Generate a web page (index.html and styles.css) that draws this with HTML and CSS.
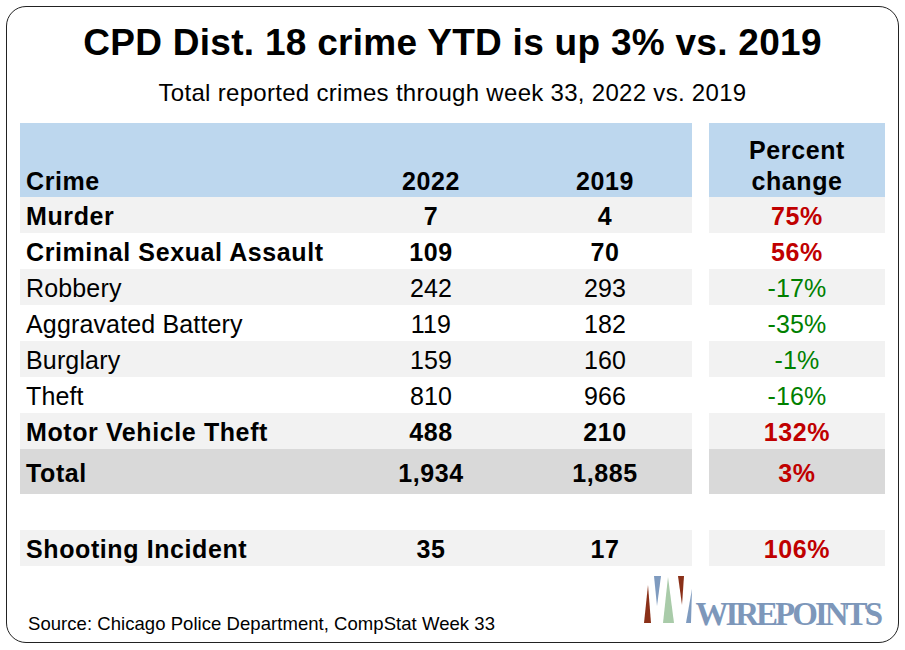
FILE: index.html
```html
<!DOCTYPE html>
<html>
<head>
<meta charset="utf-8">
<link rel="stylesheet" href="styles.css">
</head>
<body>
<div class="card">
  <h1 class="title">CPD Dist. 18 crime YTD is up 3% vs. 2019</h1>
  <p class="subtitle">Total reported crimes through week 33, 2022 vs. 2019</p>
  <div class="table">
    <div class="row head">
      <div class="cell name">Crime</div>
      <div class="cell num">2022</div>
      <div class="cell num">2019</div>
      <div class="cell pct">Percent<br>change</div>
    </div>
    <div class="row shade bold">
      <div class="cell name">Murder</div>
      <div class="cell num">7</div>
      <div class="cell num">4</div>
      <div class="cell pct up">75%</div>
    </div>
    <div class="row bold">
      <div class="cell name">Criminal Sexual Assault</div>
      <div class="cell num">109</div>
      <div class="cell num">70</div>
      <div class="cell pct up">56%</div>
    </div>
    <div class="row shade">
      <div class="cell name">Robbery</div>
      <div class="cell num">242</div>
      <div class="cell num">293</div>
      <div class="cell pct down">-17%</div>
    </div>
    <div class="row">
      <div class="cell name">Aggravated Battery</div>
      <div class="cell num">119</div>
      <div class="cell num">182</div>
      <div class="cell pct down">-35%</div>
    </div>
    <div class="row shade">
      <div class="cell name">Burglary</div>
      <div class="cell num">159</div>
      <div class="cell num">160</div>
      <div class="cell pct down">-1%</div>
    </div>
    <div class="row">
      <div class="cell name">Theft</div>
      <div class="cell num">810</div>
      <div class="cell num">966</div>
      <div class="cell pct down">-16%</div>
    </div>
    <div class="row shade bold">
      <div class="cell name">Motor Vehicle Theft</div>
      <div class="cell num">488</div>
      <div class="cell num">210</div>
      <div class="cell pct up">132%</div>
    </div>
    <div class="row total bold">
      <div class="cell name">Total</div>
      <div class="cell num">1,934</div>
      <div class="cell num">1,885</div>
      <div class="cell pct up">3%</div>
    </div>
    <div class="spacer"></div>
    <div class="row shade bold">
      <div class="cell name">Shooting Incident</div>
      <div class="cell num">35</div>
      <div class="cell num">17</div>
      <div class="cell pct up">106%</div>
    </div>
  </div>
  <div class="footer">
    <p class="source">Source: Chicago Police Department, CompStat Week 33</p>
    <div class="logo">
      <svg class="spikes" width="54" height="50" viewBox="0 0 54 50">
        <polygon points="4,48 11,48 8,10" fill="#8a3018"/>
        <polygon points="14,1 21,1 17,31" fill="#7f9bbf"/>
        <polygon points="23,48 34,48 28,2" fill="#a9cba9"/>
        <polygon points="38,1 44,1 42,30" fill="#8a3018"/>
        <polygon points="46,48 51,48 52,14" fill="#7f9bbf"/>
      </svg>
      <span class="brand">WIREPOINTS</span>
    </div>
  </div>
</div>
</body>
</html>
```

FILE: styles.css
```css
html, body {
  margin: 0;
  padding: 0;
  background: #ffffff;
}

body {
  font-family: "Liberation Sans", Arial, sans-serif;
  color: #000000;
}

.card {
  box-sizing: border-box;
  width: 893px;
  height: 637px;
  margin: 6px;
  border: 1px solid #222222;
  border-radius: 20px;
  padding: 14px 13px 0 13px;
  display: flex;
  flex-direction: column;
}

.title {
  margin: 0;
  font-size: 37px;
  line-height: 44px;
  font-weight: bold;
  letter-spacing: 0.28px;
  text-align: center;
}

.subtitle {
  margin: 13px 0 0 0;
  font-size: 24px;
  line-height: 30px;
  letter-spacing: 0.3px;
  text-align: center;
}

.table {
  margin-top: 15px;
  display: flex;
  flex-direction: column;
}

.row {
  display: grid;
  grid-template-columns: 324px 174px 174px 193px;
  grid-template-rows: 36px;
  height: 36px;
  font-size: 25px;
  line-height: 36px;
  letter-spacing: 0.15px;
}

.row.bold {
  font-weight: bold;
  letter-spacing: 0.6px;
}

.cell {
  white-space: nowrap;
  box-sizing: border-box;
  padding-top: 1px;
}

.name {
  padding-left: 6px;
}

.num {
  text-align: center;
}

.pct {
  margin-left: 17px;
  text-align: center;
}

.shade .cell {
  background: #f2f2f2;
}

.total {
  height: 45px;
  grid-template-rows: 45px;
  line-height: 45px;
}

.total .cell {
  background: #d9d9d9;
  padding-top: 2px;
}

.head {
  height: 74px;
  grid-template-rows: 74px;
  line-height: 31px;
  font-weight: bold;
  letter-spacing: 0.6px;
}

.head .cell {
  background: #bdd7ee;
  display: flex;
  flex-direction: column;
  justify-content: flex-end;
  padding-top: 0;
}

.head .num,
.head .pct {
  align-items: center;
}

.head .pct {
  display: block;
  padding-top: 12px;
}

.up {
  color: #c00000;
}

.down {
  color: #008000;
}

.spacer {
  height: 36px;
}

.footer {
  flex: 1;
  display: flex;
  justify-content: space-between;
  align-items: flex-end;
  padding: 0 5px 7px 8px;
}

.source {
  margin: 0;
  font-size: 18.5px;
  line-height: 22px;
  letter-spacing: 0.05px;
}

.logo {
  display: flex;
  align-items: baseline;
  margin-bottom: 4px;
}

.spikes {
  display: block;
  margin-right: 1px;
}

.brand {
  font-family: "Liberation Serif", "Times New Roman", serif;
  font-weight: bold;
  font-size: 33px;
  line-height: 1;
  letter-spacing: -3px;
  color: #7d97ba;
}
```
